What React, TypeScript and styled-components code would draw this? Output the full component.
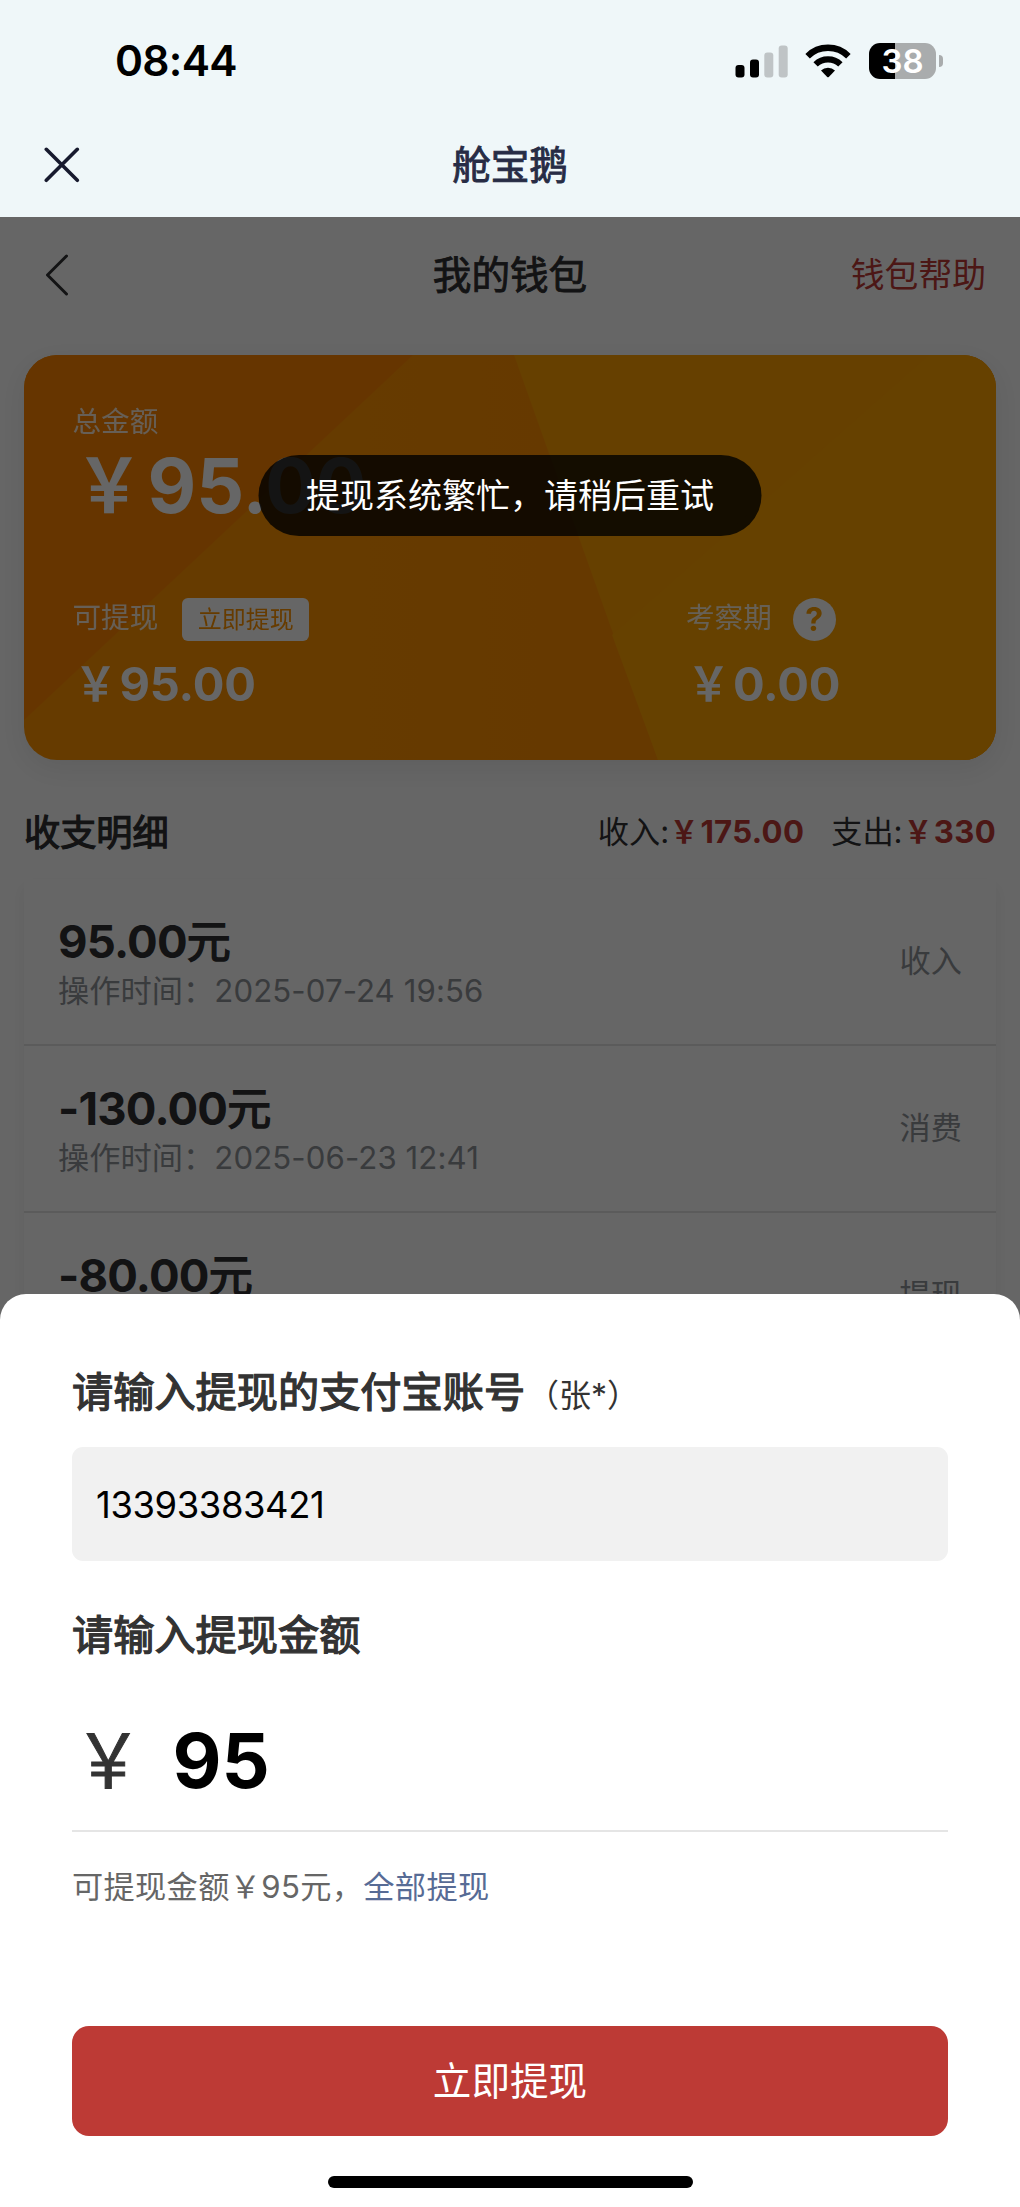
import React from "react";
import styled, { createGlobalStyle } from "styled-components";

const GlobalStyle = createGlobalStyle`
  *, *::before, *::after { box-sizing: border-box; }
  body {
    margin: 0;
    background: #fff;
    font-family: Inter, "Noto Sans CJK SC", sans-serif;
    -webkit-font-smoothing: antialiased;
  }
  h1, h2, p { margin: 0; font-weight: inherit; }
  button { border: 0; padding: 0; font-family: inherit; }
`;

const Screen = styled.div`
  width: 1020px;
  height: 2207px;
  display: flex;
  flex-direction: column;
  overflow: hidden;
`;

const TopChrome = styled.header`
  height: 217px;
  flex: none;
  background: #eff7f9;
`;

const StatusBar = styled.div`
  height: 112px;
  padding: 9px 77px 0 115px;
  display: flex;
  align-items: center;
  justify-content: space-between;
`;

const Clock = styled.span`
  font-size: 42.5px;
  font-weight: 600;
  line-height: 50px;
  letter-spacing: -0.7px;
  color: #000;
`;

const StatusIcons = styled.div`
  display: flex;
  align-items: center;
`;

const Glyph = styled.svg<{ $gap?: number }>`
  display: block;
  flex: none;
  margin-left: ${(p) => p.$gap ?? 0}px;
`;

const Battery = styled.div`
  width: 67px;
  height: 36px;
  margin-left: 18px;
  border-radius: 11px;
  background: linear-gradient(90deg, #000 0 26px, #a9acad 26px);
  display: flex;
  align-items: center;
  justify-content: center;
  color: #fff;
  font-size: 33px;
  font-weight: 600;
  line-height: 36px;
`;

const BatteryTip = styled.div`
  width: 4px;
  height: 12px;
  margin-left: 3px;
  border-radius: 0 6px 6px 0;
  background: #a9acad;
`;

const TitleBar = styled.div<{ $height: number; $side: number }>`
  height: ${(p) => p.$height}px;
  padding: 0 ${(p) => p.$side}px;
  display: grid;
  grid-template-columns: 1fr auto 1fr;
  align-items: center;
`;

const BarTitle = styled.h1<{ $color: string }>`
  font-size: 38.6px;
  font-weight: 400;
  line-height: 50px;
  color: ${(p) => p.$color};
  -webkit-text-stroke: 0.9px ${(p) => p.$color};
`;

const HelpLink = styled.span`
  justify-self: end;
  font-size: 33.8px;
  line-height: 50px;
  color: #bd3a35;
`;

const WebView = styled.main`
  position: relative;
  flex: 1;
  overflow: hidden;
  background: #fff;
`;

const CardShadow = styled.div`
  border-radius: 33px;
  filter: drop-shadow(0 8px 14px rgba(0, 0, 0, 0.08));
`;

const WalletCard = styled.section`
  position: relative;
  height: 405px;
  margin: 23px 24px 0;
  padding: 47px 48.5px 0;
  border-radius: 33px;
  overflow: hidden;
  color: #fff;
`;

const CardArt = styled.svg`
  position: absolute;
  inset: 0;
  display: block;
`;

const CardBody = styled.div`
  position: relative;
`;

const CardLabel = styled.span`
  display: block;
  font-size: 28.6px;
  line-height: 40px;
  opacity: 0.85;
`;

const Yen = styled.span`
  display: inline-block;
  width: 1em;
  text-align: center;
  transform: translateX(-0.02em) scaleX(0.9);
`;

const TotalAmount = styled.div`
  font-size: 75px;
  font-weight: 700;
  line-height: 88px;
`;

const Balances = styled.div`
  margin-top: 68px;
  display: grid;
  grid-template-columns: 613.5px 1fr;
`;

const BalanceHead = styled.div<{ $gap: number }>`
  height: 43px;
  display: flex;
  gap: ${(p) => p.$gap}px;
`;

const BalanceAmount = styled.div`
  margin-top: 15px;
  font-size: 47px;
  font-weight: 700;
  line-height: 56px;
  letter-spacing: -0.2px;
`;

const WithdrawTag = styled.span`
  width: 127px;
  height: 43px;
  border-radius: 6px;
  background: #fff;
  color: #ff9400;
  font-size: 24px;
  line-height: 44px;
  text-align: center;
`;

const HelpDot = styled.span`
  width: 43px;
  height: 43px;
  border-radius: 50%;
  background: #fff;
  color: #ffa000;
  font-size: 32px;
  font-weight: 700;
  line-height: 43px;
  text-align: center;
`;

const SectionHead = styled.div`
  height: 92px;
  margin: 27px 24px 0;
  padding-top: 21px;
  display: flex;
  align-items: flex-start;
  justify-content: space-between;
`;

const SectionTitle = styled.h2`
  font-size: 36.2px;
  font-weight: 400;
  line-height: 50px;
  color: #303133;
  -webkit-text-stroke: 1.2px #303133;
`;

const Totals = styled.div`
  display: flex;
  gap: 27px;
  font-size: 31.2px;
  line-height: 49px;
  color: #303133;
`;

const Money = styled.b`
  font-weight: 700;
  letter-spacing: 0.3px;
  color: #bd3a35;
`;

const RecordList = styled.ul`
  list-style: none;
  margin: 0 24px;
  padding: 0;
  height: 700px;
  background: #fff;
  box-shadow: 0 8px 16px rgba(0, 0, 0, 0.06);
`;

const RecordRow = styled.li`
  height: 167px;
  padding: 35px 34px 0 34px;
  border-bottom: 2px solid #e4e4e4;
  display: flex;
  justify-content: space-between;
`;

const RecordAmount = styled.div`
  padding-top: 1px;
  font-size: 45.5px;
  font-weight: 700;
  line-height: 54px;
  letter-spacing: -0.8px;
  color: #303133;
`;

const Unit = styled.span`
  font-size: 44px;
  font-weight: 400;
  line-height: 0;
  -webkit-text-stroke: 1.5px #303133;
`;

const RecordTime = styled.div`
  font-size: 31.2px;
  line-height: 44px;
  letter-spacing: 0.08px;
  color: #909399;
`;

const RecordKind = styled.span`
  font-size: 31.2px;
  line-height: 95px;
  color: #909399;
`;

const Mask = styled.div`
  position: absolute;
  inset: 0;
  background: rgba(0, 0, 0, 0.6);
  display: flex;
  flex-direction: column;
  justify-content: flex-end;
`;

const Toast = styled.div`
  position: absolute;
  top: 238px;
  left: 50%;
  transform: translateX(-50%);
  width: 503px;
  height: 81px;
  border-radius: 41px;
  background: rgba(0, 0, 0, 0.8);
  color: #fff;
  font-size: 34px;
  line-height: 81px;
  text-align: center;
  white-space: nowrap;
`;

const Sheet = styled.section`
  height: 913px;
  padding: 68px 72px 0;
  border-radius: 26px 26px 0 0;
  background: #fff;
  display: flex;
  flex-direction: column;
`;

const FieldLabel = styled.h2`
  font-size: 41.2px;
  font-weight: 400;
  line-height: 60px;
  color: #333;
  -webkit-text-stroke: 1.3px #333;
`;

const Owner = styled.small`
  margin-left: 2px;
  font-size: 32px;
  line-height: 0;
  -webkit-text-stroke: 0;
`;

const AccountBox = styled.div`
  height: 114px;
  margin: 25px 0 44px;
  padding: 0 24px;
  border-radius: 11px;
  background: #f1f1f1;
  font-size: 36.4px;
  line-height: 116px;
  letter-spacing: -0.4px;
  color: #000;
`;

const AmountField = styled.div`
  height: 122px;
  margin-top: 45px;
  border-bottom: 2px solid #e5e5e5;
  display: flex;
  gap: 25px;
  line-height: 101px;
  font-size: 75.5px;
`;

const Currency = styled.span`
  color: #333;
  -webkit-text-stroke: 1px #333;
`;

const AmountValue = styled.span`
  font-weight: 700;
  color: #000;
`;

const Tip = styled.p`
  margin-top: 33px;
  font-size: 31.2px;
  line-height: 44px;
  letter-spacing: 0.35px;
  color: #666;
`;

const AllLink = styled.span`
  color: #576b95;
`;

const SubmitButton = styled.button`
  height: 110px;
  margin-top: 117px;
  border-radius: 17px;
  background: #bd3a35;
  color: #fff;
  font-size: 38.6px;
  line-height: 111px;
`;

const HomeIndicator = styled.div`
  width: 365px;
  height: 12px;
  margin: 40px auto 0;
  border-radius: 6px;
  background: #000;
`;

const records = [
  { amount: "95.00", time: "2025-07-24 19:56", kind: "收入" },
  { amount: "-130.00", time: "2025-06-23 12:41", kind: "消费" },
  { amount: "-80.00", time: "2025-06-20 10:15", kind: "提现" },
];

function SignalIcon() {
  return (
    <Glyph width="53" height="34" viewBox="0 0 53 34">
      <rect x="0.5" y="21" width="9" height="12.5" rx="3" fill="#000" />
      <rect x="15" y="15.5" width="9" height="18" rx="3" fill="#000" />
      <rect x="29.3" y="8.5" width="9" height="25" rx="3" fill="#bfc4c6" />
      <rect x="43.7" y="1.5" width="9" height="32" rx="3" fill="#bfc4c6" />
    </Glyph>
  );
}

function WifiIcon() {
  return (
    <Glyph $gap={17} width="46" height="34" viewBox="0 0 46 34">
      <path d="M2.6 12.2A29 29 0 0 1 43.4 12.2" fill="none" stroke="#000" strokeWidth="6.4" />
      <path d="M10.6 20.4A17.8 17.8 0 0 1 35.4 20.4" fill="none" stroke="#000" strokeWidth="6.2" />
      <path d="M16 26.6a10 10 0 0 1 14 0l-6.2 6.3a1.2 1.2 0 0 1-1.6 0z" fill="#000" />
    </Glyph>
  );
}

export default function App() {
  return (
    <>
      <GlobalStyle />
      <Screen>
        <TopChrome>
          <StatusBar>
            <Clock>08:44</Clock>
            <StatusIcons>
              <SignalIcon />
              <WifiIcon />
              <Battery>38</Battery>
              <BatteryTip />
            </StatusIcons>
          </StatusBar>
          <TitleBar $height={105} $side={44}>
            <Glyph width="36" height="36" viewBox="0 0 36 36">
              <path
                d="M2.3 2.3 33.3 33.3M33.3 2.3 2.3 33.3"
                stroke="#171a2e"
                strokeWidth="3.6"
                strokeLinecap="round"
              />
            </Glyph>
            <BarTitle $color="#272c45">舱宝鹅</BarTitle>
          </TitleBar>
        </TopChrome>

        <WebView>
          <TitleBar $height={115} $side={34}>
            <Glyph $gap={10} width="26" height="42" viewBox="0 0 26 42">
              <path
                d="M22.5 2 3.5 21l19 19"
                fill="none"
                stroke="#303133"
                strokeWidth="3"
                strokeLinecap="round"
                strokeLinejoin="round"
              />
            </Glyph>
            <BarTitle $color="#303133">我的钱包</BarTitle>
            <HelpLink>钱包帮助</HelpLink>
          </TitleBar>

          <CardShadow>
            <WalletCard>
              <CardArt width="972" height="405" viewBox="0 0 972 405">
                <defs>
                  <linearGradient id="mid" x1="0" y1="0" x2="1" y2="0">
                    <stop offset="0" stopColor="#ff9300" />
                    <stop offset="0.35" stopColor="#ff9300" />
                    <stop offset="0.65" stopColor="#ff8e00" />
                  </linearGradient>
                </defs>
                <rect width="972" height="405" fill="url(#mid)" />
                <path d="M0 0H389L0 365Z" fill="#ff8600" />
                <path d="M490 0H972V405H634Z" fill="#ffa000" />
                <path d="M905 0H972V405H634L588 280Z" fill="#ffa200" />
              </CardArt>
              <CardBody>
                <CardLabel>总金额</CardLabel>
                <TotalAmount>
                  <Yen>￥</Yen>95.00
                </TotalAmount>
                <Balances>
                  <div>
                    <BalanceHead $gap={24}>
                      <CardLabel>可提现</CardLabel>
                      <WithdrawTag>立即提现</WithdrawTag>
                    </BalanceHead>
                    <BalanceAmount>
                      <Yen>￥</Yen>95.00
                    </BalanceAmount>
                  </div>
                  <div>
                    <BalanceHead $gap={21}>
                      <CardLabel>考察期</CardLabel>
                      <HelpDot>?</HelpDot>
                    </BalanceHead>
                    <BalanceAmount>
                      <Yen>￥</Yen>0.00
                    </BalanceAmount>
                  </div>
                </Balances>
              </CardBody>
            </WalletCard>
          </CardShadow>

          <SectionHead>
            <SectionTitle>收支明细</SectionTitle>
            <Totals>
              <span>
                收入:
                <Money>
                  <Yen>￥</Yen>175.00
                </Money>
              </span>
              <span>
                支出:
                <Money>
                  <Yen>￥</Yen>330
                </Money>
              </span>
            </Totals>
          </SectionHead>

          <RecordList>
            {records.map((r) => (
              <RecordRow key={r.time}>
                <div>
                  <RecordAmount>
                    {r.amount}
                    <Unit>元</Unit>
                  </RecordAmount>
                  <RecordTime>操作时间：{r.time}</RecordTime>
                </div>
                <RecordKind>{r.kind}</RecordKind>
              </RecordRow>
            ))}
          </RecordList>

          <Mask>
            <Sheet>
              <FieldLabel>
                请输入提现的支付宝账号<Owner>（张*）</Owner>
              </FieldLabel>
              <AccountBox>13393383421</AccountBox>
              <FieldLabel>请输入提现金额</FieldLabel>
              <AmountField>
                <Currency>
                  <Yen>￥</Yen>
                </Currency>
                <AmountValue>95</AmountValue>
              </AmountField>
              <Tip>
                可提现金额￥95元，<AllLink>全部提现</AllLink>
              </Tip>
              <SubmitButton>立即提现</SubmitButton>
              <HomeIndicator />
            </Sheet>
          </Mask>
          <Toast>提现系统繁忙，请稍后重试</Toast>
        </WebView>
      </Screen>
    </>
  );
}
